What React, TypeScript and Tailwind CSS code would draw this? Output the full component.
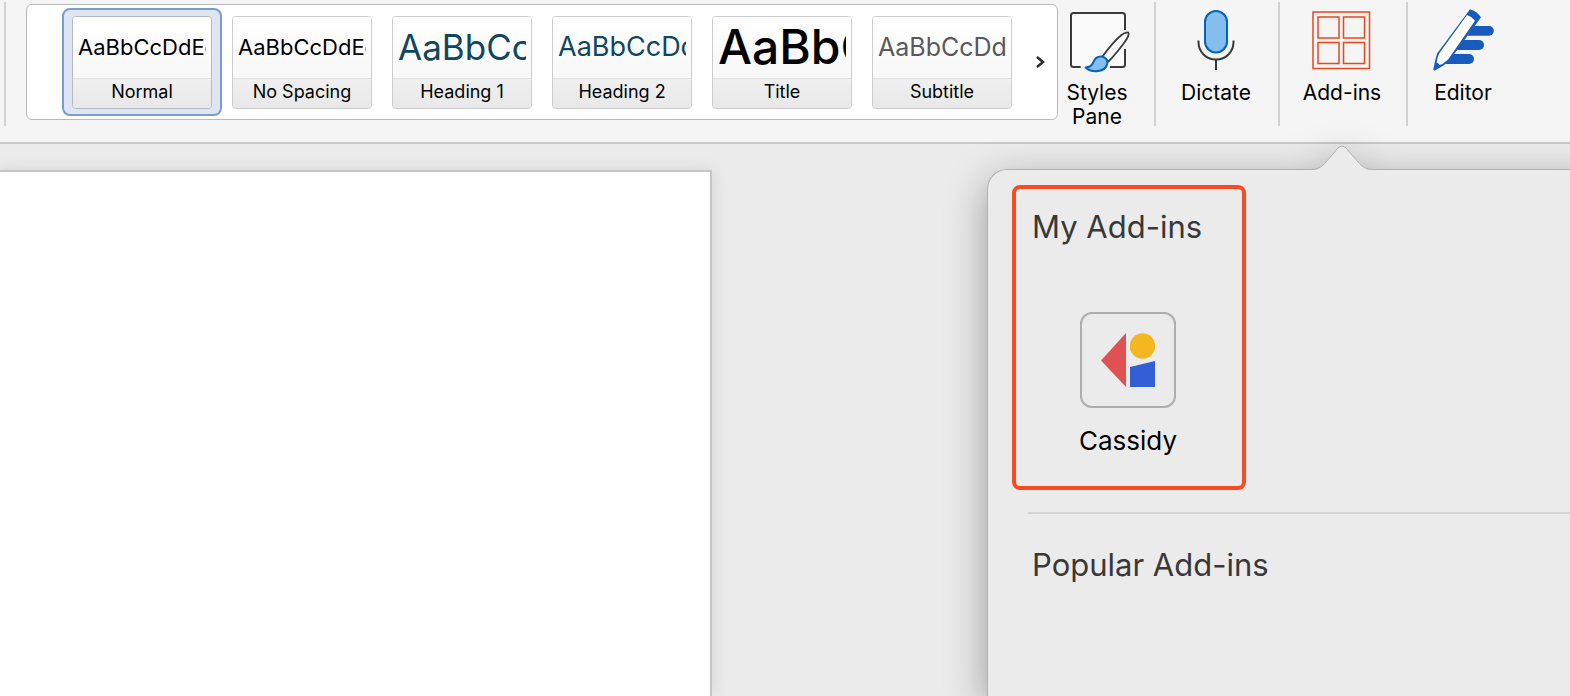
import type { ReactNode } from "react";

type StylePreset = {
  name: string;
  preview: string;
};

const presets: StylePreset[] = [
  { name: "Normal", preview: "text-[22px] text-black" },
  { name: "No Spacing", preview: "text-[22px] text-black" },
  { name: "Heading 1", preview: "text-[35px] text-[#0f4761]" },
  { name: "Heading 2", preview: "text-[27px] text-[#0f4761]" },
  { name: "Title", preview: "text-[48px] font-medium text-black" },
  { name: "Subtitle", preview: "text-[25px] text-[#595959]" },
];

function StylesPaneIcon() {
  return (
    <svg viewBox="0 0 64 64" className="size-16 overflow-visible" fill="none" aria-hidden="true">
      <path d="M6 5h54v54H6z" fill="#fafafa" />
      <path
        d="M60 22V7.5Q60 5 57.500 5H8.500Q6 5 6 7.500V56.500Q6 59 8.500 59H15.700M45 59H57.500Q60 59 60 56.500V41"
        stroke="#3b3a39"
        strokeWidth="2"
      />
      <path
        d="M37.500 48.500C43 41 50 32 56.500 27C60 24.500 63 24 63.500 25C64.300 27 62 31 59 35C54.500 41 49 48 43.500 53.500Z"
        fill="#fafafa"
        stroke="#3b3a39"
        strokeWidth="1.800"
      />
      <path
        d="M20.500 59.500C25 59.500 27 57.500 28.500 54C30 50 33 48.300 36.500 48.500C40.500 49 42.800 52 42.300 55.500C41.500 60 37.500 63 31.500 63.200C27 63.300 23 62 20.500 59.500Z"
        fill="#83beec"
        stroke="#0364b8"
        strokeWidth="2"
        strokeLinejoin="round"
      />
    </svg>
  );
}

function DictateIcon() {
  return (
    <svg viewBox="0 0 64 64" className="size-16" fill="none" aria-hidden="true">
      <rect x="21" y="3" width="22" height="41.500" rx="11" fill="#83beec" stroke="#0364b8" strokeWidth="2" />
      <path d="M14.500 32.500V34C14.500 44 22 51.500 32 51.500S49.500 44 49.500 34V32.500M32 51.500V62" stroke="#3b3a39" strokeWidth="2" />
    </svg>
  );
}

function AddInsIcon() {
  return (
    <svg viewBox="0 0 64 64" className="size-16" fill="none" stroke="#e8481c" strokeWidth="1.500" aria-hidden="true">
      <rect x="3" y="4" width="56.500" height="56.500" />
      <rect x="8" y="9" width="21" height="21" />
      <rect x="33.500" y="9" width="21" height="21" />
      <rect x="8" y="34.500" width="21" height="21" />
      <rect x="33.500" y="34.500" width="21" height="21" />
    </svg>
  );
}

function EditorIcon() {
  return (
    <svg viewBox="0 0 64 64" className="size-16" fill="#185abd" aria-hidden="true">
      <path d="M43 18H58a4.850 4.850 0 0 1 0 9.700H36.500Z" />
      <path d="M33 32H48a5 5 0 0 1 0 10H25.500Z" />
      <path d="M23 46H38a5 5 0 0 1 0 10H13Z" />
      <path d="M39 1.300Q46 3.500 49.900 9.300L44.500 17L18 53L12.500 57.500L3.500 62.800L2.300 61.500L4.500 51L6.300 45.300Z" />
      <path d="M36 7Q41 8.500 44 12.700L17.300 51.300L11.500 56L8.500 57Q7.500 54.500 5.600 54.500L6.500 50L8.300 45.300Z" fill="#fff" />
    </svg>
  );
}

function CassidyLogo() {
  return (
    <svg viewBox="0 0 54 54" className="size-[54px]" aria-hidden="true">
      <path d="M0 27.500L25 0V54Z" fill="#e05252" />
      <circle cx="41.500" cy="13" r="12.700" fill="#f3b821" />
      <path d="M29 34L54 28V54H29Z" fill="#325fd3" />
    </svg>
  );
}

function StyleCard({ preset, selected }: { preset: StylePreset; selected: boolean }) {
  return (
    <button
      type="button"
      aria-pressed={selected}
      className={`w-40 shrink-0 rounded-lg border-2 px-2 pt-1.5 pb-[5px] ${
        selected ? "border-[#7a9dcf] bg-[#dfe6f2]" : "border-transparent"
      }`}
    >
      <span
        className={`flex h-[93px] flex-col overflow-hidden rounded border ${
          selected ? "border-[#b3bac6]" : "border-[#cdcdcd]"
        }`}
      >
        <span className="flex h-[61px] items-center bg-linear-to-b from-white to-[#f8f8f8] px-[5px]">
          <span className="h-full w-full overflow-hidden text-left">
            <span className={`block leading-[60px] whitespace-nowrap ${preset.preview}`}>AaBbCcDdEe</span>
          </span>
        </span>
        <span className="flex-1 border-t border-[#e0e0e0] bg-linear-to-b from-[#f0f0f0] to-[#e8e8e8] text-center text-lg leading-[26px] text-black">
          {preset.name}
        </span>
      </span>
    </button>
  );
}

function RibbonButton({ label, icon, className }: { label: string; icon: ReactNode; className: string }) {
  return (
    <button
      type="button"
      className={`flex shrink-0 flex-col items-center gap-[9px] self-start pt-2 pr-0.5 text-[21px] leading-6 text-black ${className}`}
    >
      {icon}
      <span>{label}</span>
    </button>
  );
}

function Divider() {
  return <div className="mt-0.5 h-[124px] w-0.5 shrink-0 bg-[#d2d2d2]" />;
}

function Ribbon() {
  return (
    <header className="flex h-36 items-start overflow-hidden border-b-2 border-[#c8c8c8] bg-[#f5f5f5] pl-1">
      <Divider />
      <div className="mt-1 ml-5 flex h-[116px] shrink-0 items-center rounded-md border border-[#b9b9b9] bg-white pl-[35px]">
        {presets.map((preset, i) => (
          <StyleCard key={preset.name} preset={preset} selected={i === 0} />
        ))}
        <button type="button" aria-label="More styles" className="flex h-full w-[35px] items-center justify-center">
          <svg viewBox="0 0 10 14" className="h-3.5 w-2.5" fill="none" aria-hidden="true">
            <path d="M2 2L8 7L2 12" stroke="#2b2b2b" strokeWidth="2.500" />
          </svg>
        </button>
      </div>
      <RibbonButton label="Styles Pane" icon={<StylesPaneIcon />} className="w-20" />
      <div className="w-4 shrink-0" />
      <Divider />
      <RibbonButton label="Dictate" icon={<DictateIcon />} className="w-[122px]" />
      <Divider />
      <RibbonButton label="Add-ins" icon={<AddInsIcon />} className="w-[126px]" />
      <Divider />
      <RibbonButton label="Editor" icon={<EditorIcon />} className="w-[112px]" />
    </header>
  );
}

function AddInsPopover() {
  return (
    <aside className="relative mt-[25px] -mr-8 ml-[275px] flex-1 rounded-tl-[20px] border-t border-l border-[#b0b0b0] bg-[#ebebeb] pt-[15px] pl-6 drop-shadow-[0_12px_20px_rgba(0,0,0,0.35)]">
      {/* Pointer up to the Add-ins button */}
      <svg
        viewBox="0 0 64 26"
        className="absolute -top-[25px] left-[322px] h-[26px] w-16"
        fill="#ebebeb"
        aria-hidden="true"
      >
        <path d="M7 24H57V26H7Z" />
        <path
          d="M0 24.500C9 24.500 12 21.500 16 17L28 3Q32 -1 36 3L48 17C52 21.500 55 24.500 64 24.500"
          stroke="#b0b0b0"
        />
      </svg>

      <section className="h-[305px] w-[234px] rounded-lg border-4 border-[#fb4924] px-4 pt-[18px]">
        <h2 className="text-[31px] leading-10 whitespace-nowrap text-[#383838]">My Add-ins</h2>
        <button type="button" className="mt-[65px] ml-12 flex w-24 flex-col items-center gap-[15px] text-black">
          <span className="flex size-24 items-center justify-center rounded-xl border-2 border-[#adadad]">
            <CassidyLogo />
          </span>
          <span className="text-[26px] leading-9">Cassidy</span>
        </button>
      </section>

      <section className="mt-[22px] ml-4 border-t-2 border-[#d3d3d3] pt-[31px] pl-1">
        <h2 className="text-[31px] leading-10 text-[#383838]">Popular Add-ins</h2>
      </section>
    </aside>
  );
}

export default function App() {
  return (
    <div className="flex min-h-screen flex-col overflow-hidden bg-[#ebebeb] font-['Inter',sans-serif]">
      <Ribbon />
      <main className="flex flex-1">
        <div className="mt-[26px] w-[712px] shrink-0 border-t-2 border-r-2 border-[#c6c6c6] bg-white shadow-[0_0_16px_rgba(0,0,0,0.1)]" />
        <AddInsPopover />
      </main>
    </div>
  );
}
